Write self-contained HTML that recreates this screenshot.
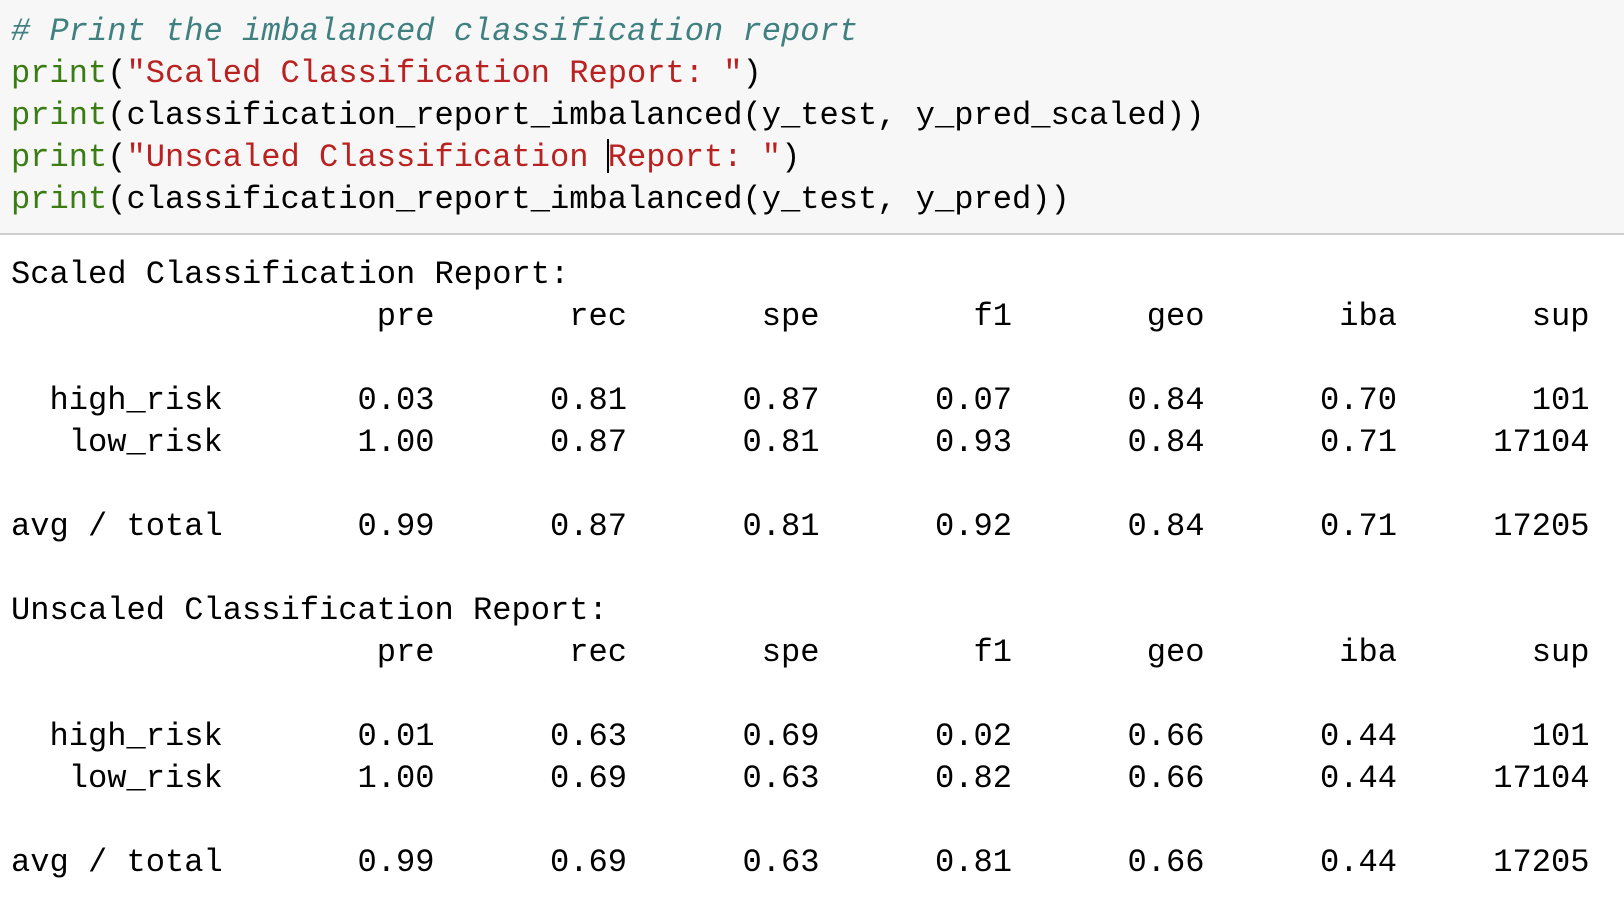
<!DOCTYPE html>
<html><head><meta charset="utf-8"><style>
html,body{margin:0;padding:0;width:1624px;height:908px;background:#fff;overflow:hidden}
pre{margin:0;font-family:"Liberation Mono",monospace;font-size:32.1px;line-height:42px;white-space:pre}
.code{background:#f7f7f7;height:235px;border-bottom:2px solid #cfcfcf;box-sizing:border-box;padding:11px 0 0 11px}
.out{padding:19px 0 0 11px;color:#000}
.c{color:#408080;font-style:italic}
.k{color:#3b7d14}
.s{color:#ba2121}
.cur{display:inline-block;width:0;border-left:2px solid #000;height:34px;vertical-align:-7px;margin-left:-1px;margin-right:-1px}
</style></head><body>
<div class="code"><pre><span class="c"># Print the imbalanced classification report</span>
<span class="k">print</span>(<span class="s">"Scaled Classification Report: "</span>)
<span class="k">print</span>(classification_report_imbalanced(y_test, y_pred_scaled))
<span class="k">print</span>(<span class="s">"Unscaled Classification <span class="cur"></span>Report: "</span>)
<span class="k">print</span>(classification_report_imbalanced(y_test, y_pred))</pre></div>
<div class="out"><pre>Scaled Classification Report:
                   pre       rec       spe        f1       geo       iba       sup

  high_risk       0.03      0.81      0.87      0.07      0.84      0.70       101
   low_risk       1.00      0.87      0.81      0.93      0.84      0.71     17104

avg / total       0.99      0.87      0.81      0.92      0.84      0.71     17205

Unscaled Classification Report:
                   pre       rec       spe        f1       geo       iba       sup

  high_risk       0.01      0.63      0.69      0.02      0.66      0.44       101
   low_risk       1.00      0.69      0.63      0.82      0.66      0.44     17104

avg / total       0.99      0.69      0.63      0.81      0.66      0.44     17205</pre></div>
</body></html>
